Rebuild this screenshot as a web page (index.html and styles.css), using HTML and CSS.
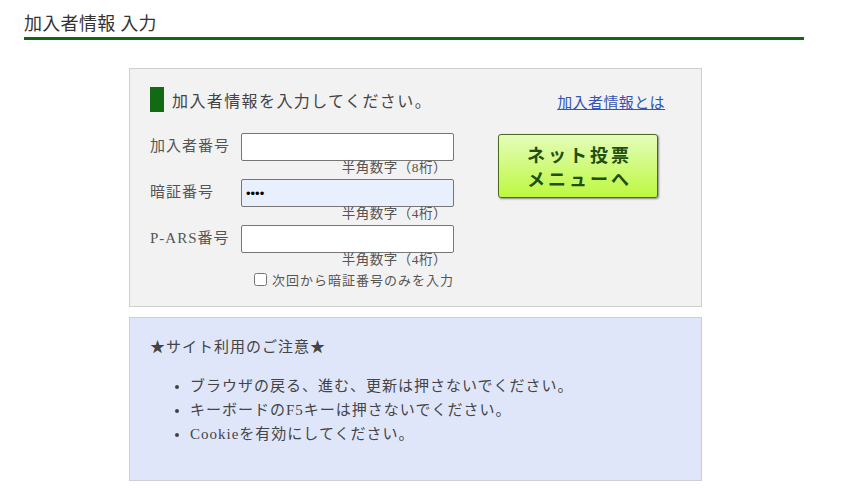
FILE: index.html
```html
<!DOCTYPE html>
<html lang="ja">
<head>
<meta charset="utf-8">
<link rel="stylesheet" href="styles.css">
</head>
<body>
<div class="page">
  <h1 class="page-title">加入者情報 入力</h1>
  <div class="login-box">
    <div class="login-head">
      <h2 class="login-title"><span class="marker"></span>加入者情報を入力してください。</h2>
      <a class="help-link" href="#">加入者情報とは</a>
    </div>
    <div class="login-body">
      <div class="fields">
        <div class="field">
          <label class="label">加入者番号</label>
          <div class="input-wrap">
            <input class="input" type="text">
            <div class="hint">半角数字（8桁）</div>
          </div>
        </div>
        <div class="field">
          <label class="label">暗証番号</label>
          <div class="input-wrap">
            <input class="input filled" type="password" value="1234">
            <div class="hint">半角数字（4桁）</div>
          </div>
        </div>
        <div class="field">
          <label class="label">P-ARS番号</label>
          <div class="input-wrap">
            <input class="input" type="text">
            <div class="hint">半角数字（4桁）</div>
          </div>
        </div>
        <label class="check"><input type="checkbox" class="checkbox">次回から暗証番号のみを入力</label>
      </div>
      <div class="action">
        <button class="vote-btn">ネット投票<br>メニューへ</button>
      </div>
    </div>
  </div>
  <div class="notice">
    <p class="notice-title">★サイト利用のご注意★</p>
    <ul class="notice-list">
      <li>ブラウザの戻る、進む、更新は押さないでください。</li>
      <li>キーボードのF5キーは押さないでください。</li>
      <li>Cookieを有効にしてください。</li>
    </ul>
  </div>
</div>
</body>
</html>
```
FILE: styles.css
```css
* { box-sizing: border-box; }
body {
  margin: 0;
  background: #fff;
  font-family: "Liberation Serif", "Noto Sans CJK JP", serif;
  color: #333;
}
.page {
  width: 780px;
  margin-left: 24px;
  padding-top: 12px;
}
.page-title {
  margin: 0;
  font-size: 18px;
  font-weight: normal;
  line-height: 25px;
  color: #333;
  border-bottom: 3px solid #0f6b12;
  letter-spacing: 0.3px;
}
.login-box {
  width: 573px;
  margin: 28px 0 0 105px;
  background: #f2f2f2;
  border: 1px solid #cfcfcf;
  padding: 18px 20px 17px 20px;
}
.login-head {
  display: flex;
  justify-content: space-between;
  align-items: center;
}
.login-title {
  margin: 0;
  display: flex;
  align-items: center;
  font-size: 16px;
  font-weight: normal;
  color: #444;
  letter-spacing: 1.4px;
}
.marker {
  display: inline-block;
  width: 14px;
  height: 25px;
  background: #126a14;
  margin-right: 8px;
}
.help-link {
  font-size: 15px;
  color: #3255b5;
  margin-right: 16px;
  margin-top: 4px;
  letter-spacing: 0.4px;
}
.login-body {
  display: flex;
  margin-top: 21px;
}
.fields {
  width: 304px;
}
.field {
  display: flex;
  align-items: flex-start;
}
.label {
  width: 91px;
  font-size: 15px;
  color: #555;
  padding-top: 1px;
  letter-spacing: 1px;
}
.input-wrap {
  width: 213px;
  display: flex;
  flex-direction: column;
  align-items: flex-end;
}
.input {
  width: 213px;
  height: 28px;
  border: 1px solid #767676;
  border-radius: 2px;
  background: #fff;
  margin: 0;
  padding: 0 4px;
  font-size: 13px;
}
.input.filled { background: #e8f0fe; }
.hint {
  font-size: 13.5px;
  line-height: 18px;
  color: #555;
  margin: -2px 7px 2px 0;
  letter-spacing: 0.5px;
}
.check {
  display: flex;
  align-items: center;
  justify-content: flex-end;
  font-size: 13px;
  color: #555;
  margin-top: -1px;
  letter-spacing: 1px;
}
.checkbox {
  width: 13px;
  height: 13px;
  margin: 0 5px 0 0;
}
.action {
  margin-left: 44px;
  padding-top: 1px;
}
.vote-btn {
  width: 160px;
  height: 64px;
  border: 1px solid #4a6a1f;
  border-radius: 3px;
  background: linear-gradient(#e4fdba, #bdf83f);
  box-shadow: 1px 1px 2px rgba(0,0,0,0.45);
  font-family: "Noto Sans CJK JP", sans-serif;
  font-weight: bold;
  font-size: 18px;
  line-height: 24px;
  letter-spacing: 3px;
  color: #1f4f12;
  padding: 0 0 0 3px;
}
.notice {
  width: 573px;
  margin: 10px 0 0 105px;
  background: #e0e6fa;
  border: 1px solid #cfcfcf;
  padding: 17px 20px 28px 20px;
  height: 164px;
}
.notice-title {
  margin: 0;
  font-size: 15px;
  line-height: 24px;
  color: #444;
  letter-spacing: 1px;
}
.notice-list {
  margin: 15px 0 0 0;
  padding-left: 40px;
  font-size: 15px;
  line-height: 24px;
  color: #444;
  letter-spacing: 1px;
}
```
